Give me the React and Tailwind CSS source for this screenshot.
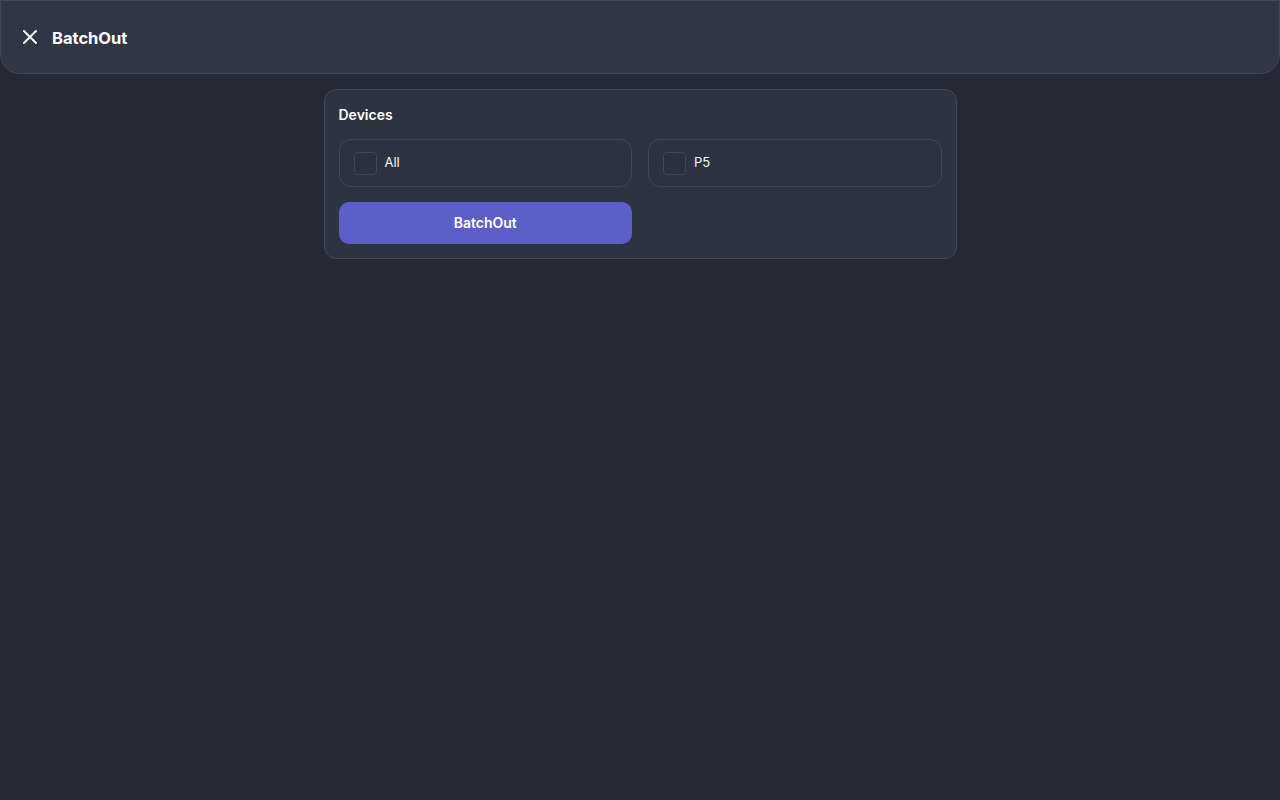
import React, { useState } from "react";
import { X } from "lucide-react";

const devices = ["All", "P5"];

const App = () => {
  const [selected, setSelected] = useState([]);

  const toggle = (name) => {
    setSelected((prev) =>
      prev.includes(name) ? prev.filter((d) => d !== name) : [...prev, name]
    );
  };

  return (
    <div
      className="min-h-screen bg-[#262833] text-white"
      style={{ fontFamily: "Inter, 'Noto Sans', sans-serif" }}
    >
      {/* Header */}
      <div className="h-[74px] flex items-center gap-[10px] px-[17px] bg-[#313645] border border-[#3f475b] rounded-b-[20px]">
        <button className="w-6 h-6 flex items-center justify-center text-white">
          <X size={24} strokeWidth={2} />
        </button>
        <h1 className="text-[16.5px] font-bold mt-[3px]">BatchOut</h1>
      </div>

      {/* Devices card */}
      <div className="w-[633px] mx-auto mt-[15px] p-[14px] bg-[#2e3341] border border-[#3e4659] rounded-xl">
        <h2 className="text-sm font-semibold mb-[14px] mt-[1px]">Devices</h2>
        <div className="grid grid-cols-2 gap-4">
          {devices.map((name) => (
            <label
              key={name}
              className="h-12 flex items-center gap-2 px-[14px] border border-[#3e4659] rounded-xl cursor-pointer"
            >
              <input
                type="checkbox"
                checked={selected.includes(name)}
                onChange={() => toggle(name)}
                className="appearance-none w-[23px] h-[23px] rounded border border-[#3e4659] bg-[#2c3140] checked:bg-[#5d5fc9]"
              />
              <span className="text-[13px] text-gray-100">{name}</span>
            </label>
          ))}
          <button className="h-[42px] mt-[-1px] rounded-[10px] bg-[#5d5fc9] text-sm font-semibold text-white">
            BatchOut
          </button>
        </div>
      </div>
    </div>
  );
};

export default App;
